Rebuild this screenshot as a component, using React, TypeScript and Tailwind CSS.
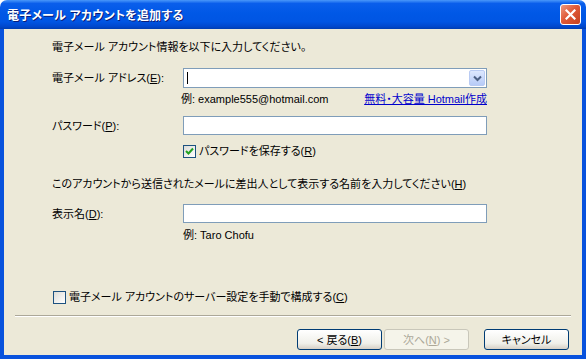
import React from "react";

const font = "font-['Liberation_Sans','Noto_Sans_CJK_JP',sans-serif] [font-feature-settings:'palt']";

const U = ({ children }: { children: React.ReactNode }) => (
  <span className="underline underline-offset-1">{children}</span>
);

const TextBox = ({ caret }: { caret?: boolean }) => (
  <div className="relative h-[19px] w-[304px] border border-[#7F9DB9] bg-white">
    {caret && <div className="absolute left-[3px] top-[3px] h-[12px] w-px bg-black" />}
  </div>
);

const ComboBox = () => (
  <div className="relative flex h-[20px] w-[304px] items-stretch border border-[#7F9DB9] bg-white p-px">
    <div className="relative flex-1">
      <div className="absolute left-[2px] top-[2px] h-[12px] w-px bg-black" />
    </div>
    <div className="flex w-[16px] items-center justify-center rounded-[2px] border border-[#B9CBF3] bg-[linear-gradient(to_bottom,#DDE8FE,#B7CBF7)]">
      <svg width="9" height="7" viewBox="0 0 9 7">
        <path d="M1 1.5 L4.5 5 L8 1.5" fill="none" stroke="#4D6185" strokeWidth="2" />
      </svg>
    </div>
  </div>
);

const CheckBox = ({ checked }: { checked?: boolean }) => (
  <div className="flex h-[13px] w-[13px] items-center justify-center border border-[#1C5180] bg-[linear-gradient(135deg,#DCDCD7,#FFFFFF)]">
    {checked && (
      <svg width="9" height="9" viewBox="0 0 9 9">
        <path d="M1 4 L3.5 6.5 L8 1.5" fill="none" stroke="#21A121" strokeWidth="2" />
      </svg>
    )}
  </div>
);

const Button = ({ children, disabled }: { children: React.ReactNode; disabled?: boolean }) => (
  <div
    className={
      disabled
        ? "flex h-[21px] w-[85px] items-center justify-center rounded-[3px] border border-[#C9C7BA] bg-[#F5F4EA] text-[#ACA899]"
        : "flex h-[21px] w-[85px] items-center justify-center rounded-[3px] border border-[#003C74] bg-[linear-gradient(to_bottom,#FFFFFF,#F0F0EA_70%,#D6D0C5)] text-black"
    }
  >
    {children}
  </div>
);

export default function App() {
  return (
    <div className={`flex h-[359px] w-[586px] flex-col overflow-hidden text-[11px] leading-[14px] ${font}`}>
      {/* title bar */}
      <div className="flex h-[29px] shrink-0 items-center justify-between rounded-t-[7px] bg-[linear-gradient(to_bottom,#4A98FA_0%,#0A5EEB_12%,#0058E6_45%,#0055E3_75%,#0047CC_92%,#003DB0_100%)] pl-[7px] pr-[5px]">
        <span className="pt-[2px] text-[12px] font-bold tracking-[0.2px] text-white [text-shadow:1px_1px_0_#0A1E7A]">
          電子メール アカウントを追加する
        </span>
        <div className="flex h-[21px] w-[21px] items-center justify-center rounded-[3px] border border-white bg-[linear-gradient(135deg,#EE9A80,#E05A38_45%,#C4401F)]">
          <svg width="11" height="11" viewBox="0 0 11 11">
            <path d="M1.5 1.5 L9.5 9.5 M9.5 1.5 L1.5 9.5" stroke="white" strokeWidth="2.2" strokeLinecap="square" />
          </svg>
        </div>
      </div>

      {/* body */}
      <div className="flex flex-1 flex-col border-x-4 border-b-4 border-[#0852DD] bg-[#ECE9D8] text-black">
        <div className="flex flex-col pl-[48px] pt-[11px]">
          <div>電子メール アカウント情報を以下に入力してください。</div>

          <div className="mt-[14px] flex items-center">
            <div className="w-[131px]">
              電子メール アドレス(<U>E</U>):
            </div>
            <ComboBox />
          </div>

          <div className="mt-[4px] flex w-[435px] justify-between pl-[129px]">
            <span>例: example555@hotmail.com</span>
            <span className="text-[#0000CC] underline underline-offset-1">無料・大容量 Hotmail作成</span>
          </div>

          <div className="mt-[10px] flex items-center">
            <div className="w-[131px]">
              パスワード(<U>P</U>):
            </div>
            <TextBox />
          </div>

          <div className="mt-[9px] flex items-center gap-[3px] pl-[131px]">
            <CheckBox checked />
            <span>
              パスワードを保存する(<U>R</U>)
            </span>
          </div>

          <div className="mt-[19px]">
            このアカウントから送信されたメールに差出人として表示する名前を入力してください(<U>H</U>)
          </div>

          <div className="mt-[13px] flex items-center">
            <div className="w-[131px]">
              表示名(<U>D</U>):
            </div>
            <TextBox />
          </div>

          <div className="mt-[5px] pl-[131px]">例: Taro Chofu</div>

          <div className="mt-[48px] flex items-center gap-[3px] pl-[1px]">
            <CheckBox />
            <span>
              電子メール アカウントのサーバー設定を手動で構成する(<U>C</U>)
            </span>
          </div>
        </div>

        <div className="ml-[11px] mr-[11px] mt-[11px] border-t border-b border-t-[#ACA899] border-b-white" />

        <div className="mt-[12px] flex justify-end pr-[13px]">
          <div className="flex gap-[2px]">
            <Button>
              &lt; 戻る(<U>B</U>)
            </Button>
            <Button disabled>
              次へ(<U>N</U>) &gt;
            </Button>
          </div>
          <div className="ml-[15px]">
            <Button>キャンセル</Button>
          </div>
        </div>
      </div>
    </div>
  );
}
